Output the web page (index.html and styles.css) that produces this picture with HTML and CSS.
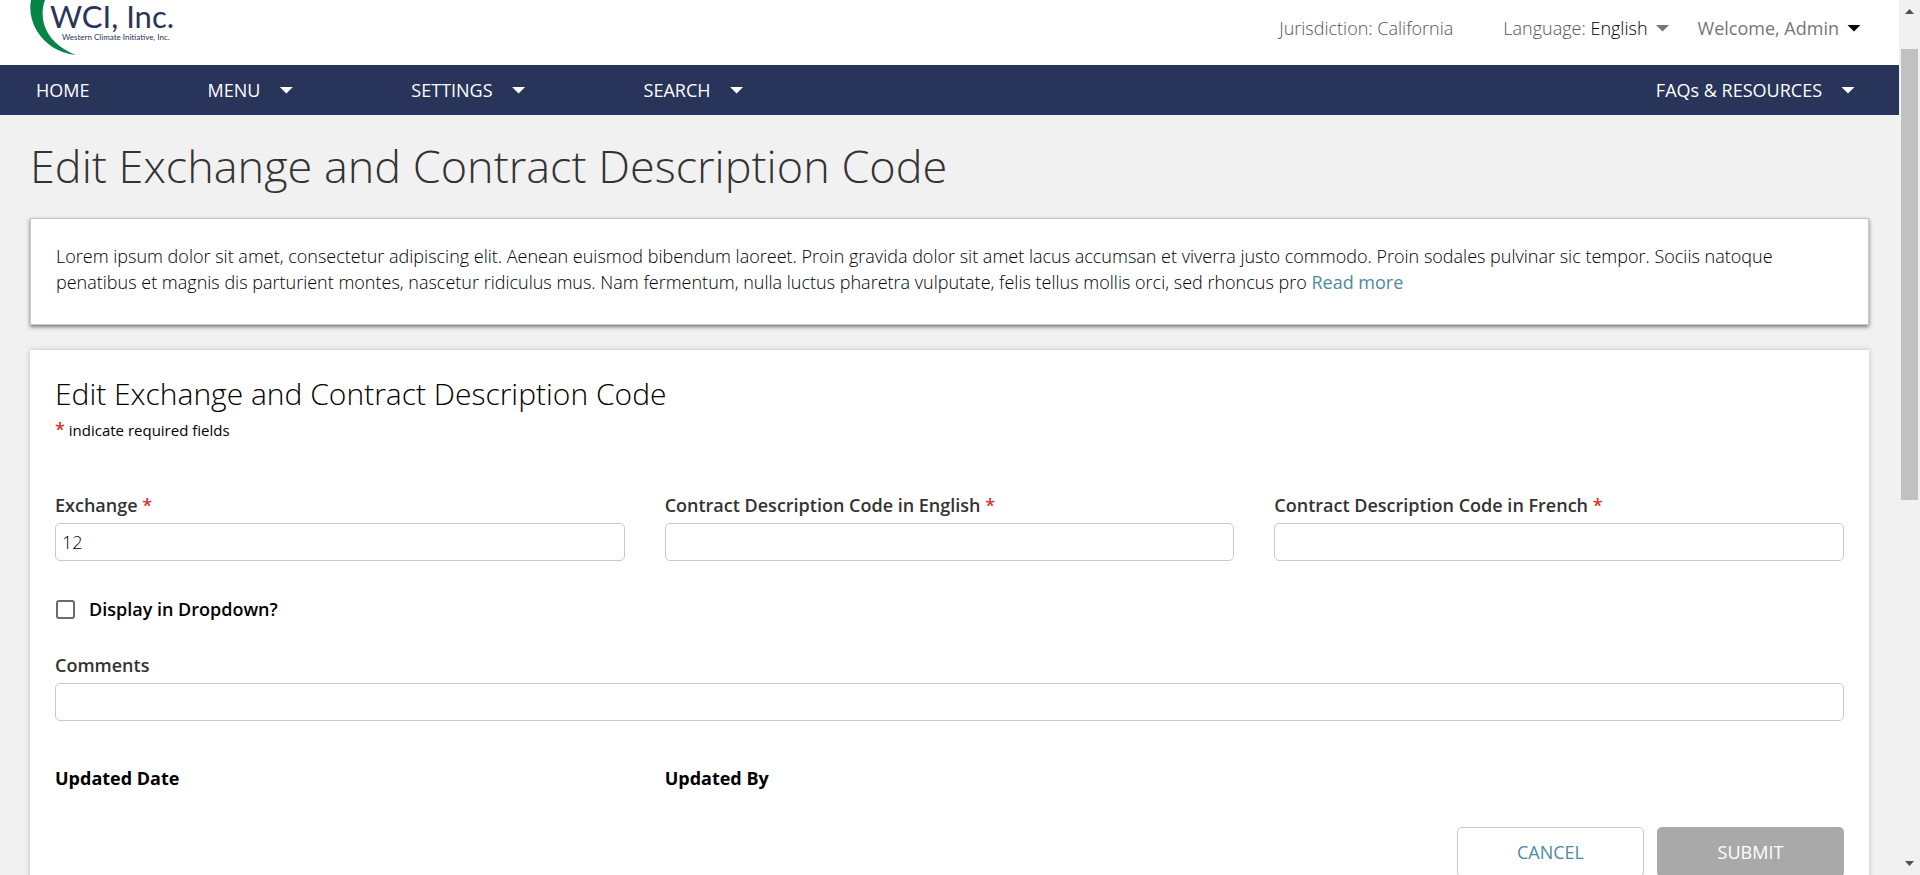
FILE: index.html
```html
<!DOCTYPE html>
<html lang="en">
<head>
<meta charset="utf-8">
<title>Edit Exchange and Contract Description Code</title>
<link rel="stylesheet" href="styles.css">
</head>
<body>
<div class="shell">
  <div class="page">
    <header class="topbar">
      <a class="logo" href="#" aria-label="WCI, Inc.">
        <svg width="150" height="56" viewBox="0 0 150 56">
          <path d="M1 0C-1 10 1 21 7 31C15 44 28 53 46 55C30 49 18 38 14 24C12 16 12 8 15 0Z" fill="#058545"/>
          <text class="logo-name" x="20" y="28">WCI, Inc.</text>
          <text class="logo-tag" x="32" y="40">Western Climate Initiative, Inc.</text>
        </svg>
      </a>
      <div class="account">
        <span class="jurisdiction">Jurisdiction: California</span>
        <button class="account-menu language" type="button"><span>Language: <span class="current">English</span></span><span class="caret caret-gray"></span></button>
        <button class="account-menu user" type="button"><span>Welcome, Admin</span><span class="caret caret-black"></span></button>
      </div>
    </header>
    <nav class="nav">
      <a href="#">HOME</a>
      <button type="button">MENU<span class="caret"></span></button>
      <button type="button">SETTINGS<span class="caret"></span></button>
      <button type="button">SEARCH<span class="caret"></span></button>
      <button class="nav-end" type="button">FAQs &amp; RESOURCES<span class="caret"></span></button>
    </nav>
    <main class="content">
      <h1>Edit Exchange and Contract Description Code</h1>
      <section class="intro">
        <p>Lorem ipsum dolor sit amet, consectetur adipiscing elit. Aenean euismod bibendum laoreet. Proin gravida dolor sit amet lacus accumsan et viverra justo commodo. Proin sodales pulvinar sic tempor. Sociis natoque penatibus et magnis dis parturient montes, nascetur ridiculus mus. Nam fermentum, nulla luctus pharetra vulputate, felis tellus mollis orci, sed rhoncus pro <a class="read-more" href="#">Read more</a></p>
      </section>
      <form class="card">
        <h2>Edit Exchange and Contract Description Code</h2>
        <p class="hint"><span class="star">*</span> indicate required fields</p>
        <div class="columns">
          <div class="field">
            <label for="exchange">Exchange <span class="star">*</span></label>
            <input id="exchange" type="text" value="12">
          </div>
          <div class="field">
            <label for="code-en">Contract Description Code in English <span class="star">*</span></label>
            <input id="code-en" type="text">
          </div>
          <div class="field">
            <label for="code-fr">Contract Description Code in French <span class="star">*</span></label>
            <input id="code-fr" type="text">
          </div>
        </div>
        <div class="check">
          <input id="display" type="checkbox">
          <label for="display">Display in Dropdown?</label>
        </div>
        <div class="field">
          <label for="comments">Comments</label>
          <input id="comments" type="text">
        </div>
        <div class="columns updated">
          <span>Updated Date</span>
          <span>Updated By</span>
        </div>
        <div class="actions">
          <button class="cancel" type="button">CANCEL</button>
          <button class="submit" type="submit" disabled>SUBMIT</button>
        </div>
      </form>
    </main>
  </div>
  <div class="scrollbar" aria-hidden="true">
    <svg width="9" height="5" viewBox="0 0 9 5"><path d="M0 5L4.500 0L9 5Z" fill="#505050"/></svg>
    <div class="track"><div class="thumb"></div></div>
    <svg width="9" height="5" viewBox="0 0 9 5"><path d="M0 0L4.500 5L9 0Z" fill="#505050"/></svg>
  </div>
</div>
</body>
</html>
```
FILE: styles.css
```css
* {
  box-sizing: border-box;
}

body {
  margin: 0;
  font-family: "Open Sans", "Noto Sans", sans-serif;
  font-size: 18px;
  line-height: 26px;
  color: #333;
  background: #f1f1f1;
}

button,
input {
  font: inherit;
  color: inherit;
}

button {
  margin: 0;
  padding: 0;
  border: 0;
  background: none;
}

a {
  color: inherit;
  text-decoration: none;
}

h1,
h2,
p {
  margin: 0;
}

.shell {
  display: flex;
  height: 100vh;
  overflow: hidden;
}

.page {
  flex: 1;
  min-width: 0;
  overflow: hidden;
}

.topbar {
  display: flex;
  justify-content: space-between;
  align-items: flex-start;
  height: 65px;
  padding: 0 38px 0 30px;
  background: #fff;
}

.logo svg {
  display: block;
}

.logo-name {
  font-family: Lato, sans-serif;
  font-size: 31px;
  fill: #28345a;
}

.logo-tag {
  font-family: Lato, sans-serif;
  font-size: 8px;
  fill: #28345a;
}

.account {
  display: flex;
  padding-top: 15px;
  font-weight: 300;
  color: #555;
}

.account-menu {
  display: flex;
  align-items: center;
  gap: 8px;
}

.language {
  margin: 0 28px 0 50px;
}

.user {
  font-weight: 400;
  color: #767676;
}

.current {
  color: #000;
}

.caret {
  width: 14px;
  height: 7px;
  background: currentColor;
  clip-path: polygon(0 0, 100% 0, 50% 100%);
}

.caret-gray {
  color: #767676;
}

.caret-black {
  color: #000;
}

.nav {
  display: flex;
  align-items: center;
  gap: 118px;
  height: 50px;
  padding: 0 44px 0 36px;
  background: #28345a;
  color: #fff;
}

.nav button {
  display: flex;
  align-items: center;
  gap: 19px;
}

.nav .nav-end {
  margin-left: auto;
}

.content {
  padding: 20px 30px;
}

h1 {
  font-size: 45px;
  font-weight: 300;
  line-height: 61px;
}

.intro {
  margin: 22px 0 25px;
  padding: 24px 25px 29px;
  border: 1px solid #c8c8c8;
  background: #fff;
  font-weight: 300;
  color: #000;
  box-shadow: 0 2px 4px rgba(0, 0, 0, 0.5);
}

.read-more {
  font-weight: 400;
  color: #4c8ba3;
}

.card {
  padding: 24px 25px;
  background: #fff;
  box-shadow: 0 0 6px rgba(0, 0, 0, 0.2);
}

h2 {
  font-size: 30px;
  font-weight: 300;
  line-height: 40px;
  color: #000;
}

.hint {
  font-size: 15px;
  line-height: 30px;
  color: #000;
}

.star {
  font-size: 18px;
  font-weight: 600;
  color: #d0342c;
}

.columns {
  display: grid;
  grid-template-columns: repeat(3, 1fr);
  gap: 40px;
  margin-top: 47px;
}

.field {
  display: flex;
  flex-direction: column;
  gap: 5px;
}

label {
  font-weight: 600;
}

.field input {
  width: 100%;
  height: 38px;
  padding: 0 6px;
  border: 1px solid #c8c8c8;
  border-radius: 5px;
  background: #fff;
  font-weight: 300;
  color: #000;
}

.check {
  display: flex;
  align-items: center;
  gap: 14px;
  margin: 35px 0 30px;
  color: #000;
}

.check input {
  appearance: none;
  width: 19px;
  height: 19px;
  margin: 0 0 0 1px;
  border: 2px solid #6b6b6b;
  border-radius: 3px;
  background: #fff;
}

.updated {
  margin-top: 44px;
  font-weight: 700;
  color: #000;
}

.actions {
  display: flex;
  justify-content: flex-end;
  gap: 13px;
  margin-top: 36px;
}

.actions button {
  width: 187px;
  height: 50px;
  border-radius: 5px;
}

.actions .cancel {
  border: 1px solid #c8c8c8;
  color: #4c8ba3;
}

.actions .submit {
  background: #a9a9a9;
  color: #fff;
}

.scrollbar {
  display: flex;
  flex-direction: column;
  align-items: center;
  gap: 10px;
  width: 21px;
  padding: 9px 0;
  background: #f1f1f1;
}

.track {
  flex: 1;
  align-self: stretch;
  padding: 25px 2px;
}

.thumb {
  height: 58%;
  background: #c1c1c1;
}
```
